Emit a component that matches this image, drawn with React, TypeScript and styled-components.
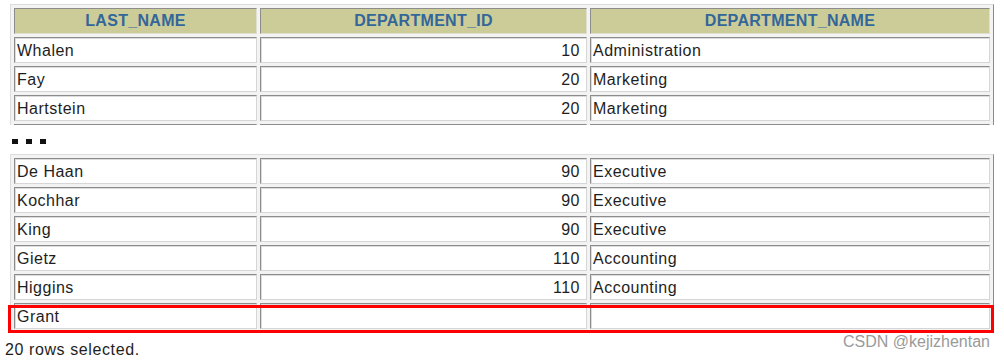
import React from 'react';
import styled, { createGlobalStyle } from 'styled-components';

const GlobalStyle = createGlobalStyle`
  html, body {
    margin: 0;
    padding: 0;
    background: #ffffff;
  }
  body {
    font-family: "Liberation Sans", Arial, sans-serif;
    color: #1e1e1e;
  }
`;

const Page = styled.div`
  position: relative;
  width: 1004px;
  height: 362px;
  overflow: hidden;
  padding-top: 4px;
  box-sizing: border-box;
`;

const Clip = styled.div<{ $height?: number }>`
  margin-left: 10px;
  height: ${({ $height }) => ($height ? `${$height}px` : 'auto')};
  overflow: hidden;
`;

const Table = styled.table`
  width: 984px;
  table-layout: fixed;
  border-collapse: separate;
  border-spacing: 3px;
  background: #f3f3f3;
  border: 1px solid;
  border-color: #dcdcdc #8a8a8a #8a8a8a #dcdcdc;
  box-sizing: border-box;
`;

const HeadCell = styled.th`
  height: 26px;
  padding: 0;
  box-sizing: border-box;
  background: #cccc99;
  color: #336699;
  font-size: 16px;
  font-weight: bold;
  letter-spacing: 0.3px;
  text-align: center;
  border: 1px solid;
  border-color: #8c8c8c #e0e0d0 #e0e0d0 #8c8c8c;
`;

const Cell = styled.td<{ $num?: boolean }>`
  height: 26px;
  padding: 1px ${({ $num }) => ($num ? '6px' : '2px')} 0 2px;
  box-sizing: border-box;
  background: #ffffff;
  font-size: 16px;
  letter-spacing: 0.5px;
  text-align: ${({ $num }) => ($num ? 'right' : 'left')};
  white-space: nowrap;
  border: 1px solid;
  border-color: #8c8c8c #d6d6d6 #d6d6d6 #8c8c8c;
  box-shadow: inset 1px 1px 0 #dcdcdc;
`;

const Ellipsis = styled.div`
  display: flex;
  gap: 8px;
  margin: 14px 0 10px 12px;
  height: 5px;
`;

const Dot = styled.span`
  width: 6px;
  height: 5px;
  background: #111;
`;

const Highlight = styled.div`
  position: absolute;
  left: 8px;
  top: 305px;
  width: 986px;
  height: 28px;
  border: 3px solid #ff0000;
  box-sizing: border-box;
  pointer-events: none;
`;

const Status = styled.div`
  margin: 8px 0 0 5px;
  font-size: 16px;
  letter-spacing: 0.6px;
  color: #1e1e1e;
`;

const Watermark = styled.div`
  position: absolute;
  right: 14px;
  top: 333px;
  font-size: 16px;
  color: #9a9a9a;
`;

type Row = [string, number | null, string];

const firstRows: Row[] = [
  ['Whalen', 10, 'Administration'],
  ['Fay', 20, 'Marketing'],
  ['Hartstein', 20, 'Marketing'],
  ['', null, ''],
];

const lastRows: Row[] = [
  ['De Haan', 90, 'Executive'],
  ['Kochhar', 90, 'Executive'],
  ['King', 90, 'Executive'],
  ['Gietz', 110, 'Accounting'],
  ['Higgins', 110, 'Accounting'],
  ['Grant', null, ''],
];

const Cols = () => (
  <colgroup>
    <col style={{ width: 243 }} />
    <col style={{ width: 327 }} />
    <col />
  </colgroup>
);

const Rows = ({ rows }: { rows: Row[] }) => (
  <>
    {rows.map((r, i) => (
      <tr key={i}>
        <Cell>{r[0]}</Cell>
        <Cell $num>{r[1] ?? ''}</Cell>
        <Cell>{r[2]}</Cell>
      </tr>
    ))}
  </>
);

export default function App() {
  return (
    <Page>
      <GlobalStyle />
      <Clip $height={121}>
        <Table>
          <Cols />
          <thead>
            <tr>
              <HeadCell>LAST_NAME</HeadCell>
              <HeadCell>DEPARTMENT_ID</HeadCell>
              <HeadCell>DEPARTMENT_NAME</HeadCell>
            </tr>
          </thead>
          <tbody>
            <Rows rows={firstRows} />
          </tbody>
        </Table>
      </Clip>
      <Ellipsis>
        <Dot />
        <Dot />
        <Dot />
      </Ellipsis>
      <Clip>
        <Table>
          <Cols />
          <tbody>
            <Rows rows={lastRows} />
          </tbody>
        </Table>
      </Clip>
      <Status>20 rows selected.</Status>
      <Highlight />
      <Watermark>CSDN @kejizhentan</Watermark>
    </Page>
  );
}
